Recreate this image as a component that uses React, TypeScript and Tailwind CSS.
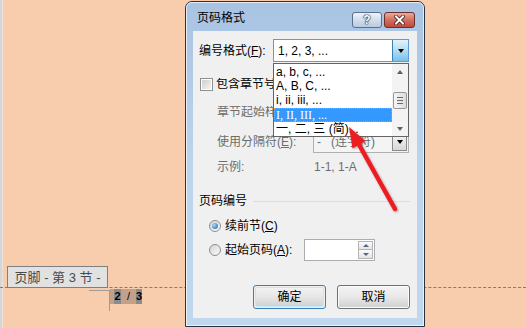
import React from "react";

function Tri({ dir = "down", color = "border-t-black" }: { dir?: "down" | "up"; color?: string }) {
  if (dir === "up")
    return <div className="h-0 w-0 border-x-[3.5px] border-b-[4px] border-x-transparent border-b-[#606060]" />;
  return <div className={`h-0 w-0 border-x-[3.5px] border-t-[4px] border-x-transparent ${color}`} />;
}

function Radio({ checked }: { checked?: boolean }) {
  return (
    <div className="flex h-[12px] w-[12px] items-center justify-center rounded-full border border-[#8e8f8f] bg-linear-to-br from-[#d4d4d4] to-[#fbfbfb]">
      {checked && (
        <div className="h-[6px] w-[6px] rounded-full bg-[radial-gradient(circle_at_35%_35%,#a6d8fb,#1d5f9f)]" />
      )}
    </div>
  );
}

export default function App() {
  return (
    <div className="relative h-[328px] w-[526px] overflow-hidden bg-[#f7cdae] font-['Segoe_UI','Liberation_Sans','Noto_Sans_CJK_SC',sans-serif] text-[12px] leading-none text-black">
      {/* left page edge */}
      <div className="absolute left-0 top-0 h-full w-[2px] bg-[#d6d6d6]" />
      <div className="absolute left-[2px] top-0 h-full w-px bg-[#ece2da]" />

      {/* footer dashed line */}
      <div className="absolute left-0 top-[287px] w-full border-t border-dashed border-[#7d7d7d]" />

      {/* footer tag */}
      <div className="absolute left-[7px] top-[266px] flex h-[22px] w-[101px] items-center justify-center border border-[#7f7f7f] bg-[#e1e1e1] whitespace-pre text-[13px] text-[#4a4a4a]">
        页脚 - 第 3 节 -
      </div>

      {/* cursor lines */}
      <div className="absolute left-[89px] top-[290px] h-px w-[20px] bg-[#9c9c9c]" />
      <div className="absolute left-[109px] top-[290px] h-[21px] w-px bg-[#9c9c9c]" />

      {/* page number */}
      <div className="absolute left-[110px] top-[289px] flex h-[15px] w-[32px] items-center bg-[#c3a08a] font-['Liberation_Sans',sans-serif] text-[11px] font-bold">
        <span className="ml-[4px] flex h-full w-[7px] items-center justify-center bg-[#8b8b8b]">2</span>
        <span className="mx-auto font-normal">/</span>
        <span className="flex h-full w-[6px] items-center justify-center bg-[#8b8b8b]">3</span>
      </div>

      {/* dialog window */}
      <div className="absolute left-[185px] top-[1px] h-[326px] w-[240px] rounded-t-[7px] border border-[#28323d] bg-linear-to-b from-[#a8c3e3] via-[#bdd4ec] to-[#c0d7ef]">
        <div className="flex h-full flex-col rounded-t-[6px] border border-white/70 px-[6px]">
          {/* title bar */}
          <div className="flex h-[28px] items-start">
            <span className="ml-[4px] mt-[9px] text-[12px]">页码格式</span>
            <div className="ml-auto mr-[2px] mt-[9px] flex gap-[2px]">
              <div className="flex h-[16px] w-[30px] items-center justify-center rounded-[3px] border border-[#5a6f8c] bg-linear-to-b from-[#eef3f9] via-[#d2deec] to-[#b9cbe0] font-['Liberation_Sans',sans-serif] text-[12px] font-bold text-white [text-shadow:0_0_1px_#1a2a40,0_0_1px_#1a2a40,0_0_2px_#1a2a40]">
                ?
              </div>
              <div className="flex h-[16px] w-[31px] items-center justify-center rounded-[3px] border border-[#6b2f2f] bg-linear-to-b from-[#eaaa9d] via-[#d26f5e] to-[#c2473a]">
                <svg width="11" height="10" viewBox="0 0 11 10">
                  <path d="M2 1.5 L9 8.5 M9 1.5 L2 8.5" stroke="#3a1a1a" strokeWidth="3.6" strokeLinecap="square" />
                  <path d="M2 1.5 L9 8.5 M9 1.5 L2 8.5" stroke="#ffffff" strokeWidth="2" strokeLinecap="square" />
                </svg>
              </div>
            </div>
          </div>

          {/* client area */}
          <div className="relative flex h-[287px] flex-col bg-[#f0f0f0]">
            {/* row 1 */}
            <div className="mt-[8px] flex h-[23px] items-center">
              <span className="ml-[6px] w-[74px]">
                编号格式(<span className="underline underline-offset-1">F</span>):
              </span>
              <div className="flex h-full w-[136px] border border-[#5d9ad6] bg-white">
                <span className="flex flex-1 items-center pl-[4px]">1, 2, 3, ...</span>
                <div className="flex h-full w-[16px] items-center justify-center border-l border-[#3c7fb1] bg-linear-to-b from-[#e3f3fc] via-[#b2dcf3] to-[#79c0e8]">
                  <Tri />
                </div>
              </div>
            </div>

            {/* row 2 checkbox */}
            <div className="mt-[12px] flex h-[20px] items-center">
              <div className="ml-[7px] flex h-[13px] w-[13px] items-center justify-center border border-[#8e8f8f] bg-white">
                <div className="h-[9px] w-[9px] bg-linear-to-br from-[#cfcfcf] to-[#f4f4f4]" />
              </div>
              <span className="ml-[3px] w-[57px] overflow-hidden whitespace-nowrap">包含章节号</span>
            </div>

            {/* row 3 */}
            <div className="mt-[8px] flex h-[20px] items-center text-[#6d6d6d]">
              <span className="ml-[24px] w-[56px] overflow-hidden whitespace-nowrap">章节起始样式</span>
            </div>

            {/* row 4 */}
            <div className="mt-[9px] flex h-[22px] items-center text-[#6d6d6d]">
              <span className="ml-[24px] w-[96px]">
                使用分隔符(<span className="underline">E</span>):
              </span>
              <div className="flex h-full w-[96px] border border-[#b0b0b0] bg-[#f4f4f4]">
                <span className="flex flex-1 items-center whitespace-pre pl-[3px]">-   (连字符)</span>
                <div className="my-[1px] mr-[1px] flex w-[15px] items-center justify-center border border-[#8a8a8a] bg-linear-to-b from-[#f4f4f4] to-[#d8d8d8]">
                  <Tri />
                </div>
              </div>
            </div>

            {/* row 5 */}
            <div className="mt-[4px] flex h-[20px] items-center text-[#6d6d6d]">
              <span className="ml-[24px] w-[97px]">示例:</span>
              <span>1-1, 1-A</span>
            </div>

            {/* row 6 group header */}
            <div className="mt-[16px] flex h-[16px] items-center">
              <span className="ml-[6px]">页码编号</span>
              <div className="ml-[6px] mr-[7px] h-px flex-1 bg-[#d8dfe4]" />
            </div>

            {/* row 7 */}
            <div className="mt-[7px] flex h-[20px] items-center">
              <div className="ml-[16px]">
                <Radio checked />
              </div>
              <span className="ml-[4px]">
                续前节(<span className="underline">C</span>)
              </span>
            </div>

            {/* row 8 */}
            <div className="mt-[3px] flex h-[22px] items-center">
              <div className="ml-[16px]">
                <Radio />
              </div>
              <span className="ml-[4px] w-[79px]">
                起始页码(<span className="underline">A</span>):
              </span>
              <div className="flex h-full w-[71px] justify-end border border-[#abadb3] bg-white pr-[1px] pt-[1px]">
                <div className="flex h-[18px] w-[15px] flex-col">
                  <div className="flex h-[9px] items-center justify-center border border-[#b5b5b5] bg-linear-to-b from-[#fbfbfb] to-[#e4e4e4]">
                    <div className="h-0 w-0 border-x-[3px] border-b-[3px] border-x-transparent border-b-[#4e6a8d]" />
                  </div>
                  <div className="flex h-[9px] items-center justify-center border border-t-0 border-[#b5b5b5] bg-linear-to-b from-[#fbfbfb] to-[#e4e4e4]">
                    <div className="h-0 w-0 border-x-[3px] border-t-[3px] border-x-transparent border-t-[#4e6a8d]" />
                  </div>
                </div>
              </div>
            </div>

            {/* row 9 buttons */}
            <div className="mt-[24px] flex h-[24px]">
              <div className="ml-[60px] flex w-[73px] rounded-[3px] border border-[#3c7fb1] p-px">
                <div className="flex flex-1 items-center justify-center rounded-[2px] border border-[#c4e8fb] bg-linear-to-b from-[#f2f2f2] via-[#e6e6e6] to-[#d2d2d2]">
                  确定
                </div>
              </div>
              <div className="ml-[11px] flex w-[73px] items-center justify-center rounded-[3px] border border-[#707070] bg-linear-to-b from-[#f4f4f4] via-[#e8e8e8] to-[#d0d0d0] shadow-[inset_0_0_0_1px_#fbfbfb]">
                取消
              </div>
            </div>

            {/* dropdown list */}
            <div className="absolute left-[80px] top-[32px] flex h-[74px] w-[136px] border border-[#646464] bg-white">
              <div className="flex flex-1 flex-col pt-px">
                <div className="flex h-[14.5px] items-center pl-[2px]">a, b, c, ...</div>
                <div className="flex h-[14.5px] items-center pl-[2px]">A, B, C, ...</div>
                <div className="flex h-[14.5px] items-center pl-[2px]">i, ii, iii, ...</div>
                <div className="flex h-[14.5px] items-center border border-dotted border-[#e29a3c] bg-[#3399ff] pl-px font-['Liberation_Serif',serif] text-white">
                  I, II, III, ...
                </div>
                <div className="flex h-[14.5px] items-center pl-[2px]">一, 二, 三 (简)...</div>
              </div>
              <div className="flex w-[16px] flex-col items-center bg-[#f3f3f3]">
                <div className="flex h-[16px] w-full items-center justify-center">
                  <Tri dir="up" />
                </div>
                <div className="mt-[12px] flex h-[17px] w-[14px] flex-col items-center justify-center gap-[2px] rounded-[2px] border border-[#979797] bg-linear-to-r from-[#f6f6f6] to-[#dcdcdc]">
                  <div className="h-px w-[6px] bg-[#6a6a6a]" />
                  <div className="h-px w-[6px] bg-[#6a6a6a]" />
                  <div className="h-px w-[6px] bg-[#6a6a6a]" />
                </div>
                <div className="mt-auto flex h-[14px] w-full items-center justify-center">
                  <Tri color="border-t-[#606060]" />
                </div>
              </div>
            </div>
          </div>
        </div>
      </div>

      {/* red arrow */}
      <svg className="pointer-events-none absolute left-0 top-0" width="526" height="328" viewBox="0 0 526 328">
        <defs>
          <filter id="sh" x="-20%" y="-20%" width="140%" height="140%">
            <feDropShadow dx="1" dy="1" stdDeviation="1" floodColor="#000" floodOpacity="0.35" />
          </filter>
        </defs>
        <g filter="url(#sh)">
          <line x1="395" y1="209" x2="357" y2="141" stroke="#ec1c24" strokeWidth="4.5" strokeLinecap="round" />
          <polygon points="349,127 365.5,141 352.5,148.5" fill="#ec1c24" />
        </g>
      </svg>
    </div>
  );
}
